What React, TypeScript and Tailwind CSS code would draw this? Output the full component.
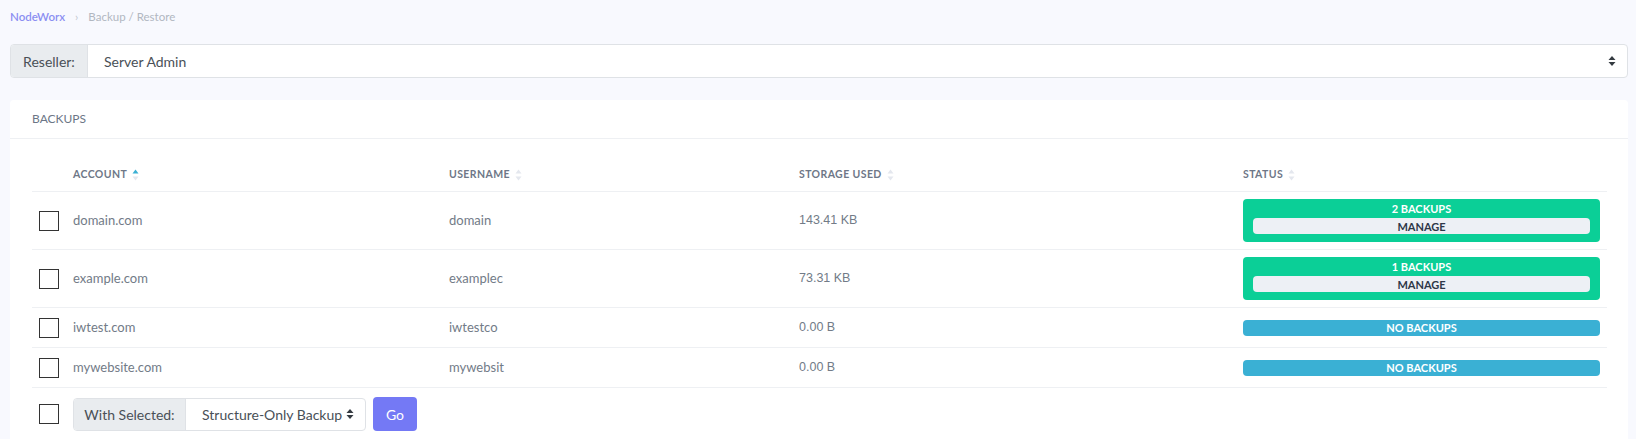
import React from "react";

type Row = {
  account: string;
  username: string;
  storage: string;
  backups: number;
};

const rows: Row[] = [
  { account: "domain.com", username: "domain", storage: "143.41 KB", backups: 2 },
  { account: "example.com", username: "examplec", storage: "73.31 KB", backups: 1 },
  { account: "iwtest.com", username: "iwtestco", storage: "0.00 B", backups: 0 },
  { account: "mywebsite.com", username: "mywebsit", storage: "0.00 B", backups: 0 },
];

const font = { fontFamily: 'Lato, "Noto Sans", sans-serif' };

function SortIcon({ active }: { active?: boolean }) {
  return (
    <svg width="7" height="12" viewBox="0 0 7 12" className="ml-[5px] shrink-0">
      <path d="M3.5 0.5 L6.5 4.5 L0.5 4.5 Z" fill={active ? "#3ab0d4" : "#e4e7ee"} />
      <path d="M3.5 11.5 L6.5 7.5 L0.5 7.5 Z" fill="#e4e7ee" />
    </svg>
  );
}

function SelectArrows() {
  return (
    <svg width="8" height="12" viewBox="0 0 8 12" className="shrink-0">
      <path d="M4 1 L7.5 5 L0.5 5 Z" fill="#343a40" />
      <path d="M4 11 L7.5 7 L0.5 7 Z" fill="#343a40" />
    </svg>
  );
}

function Checkbox() {
  return <div className="h-[20px] w-[20px] border-[1.5px] border-[#333] bg-white" />;
}

function Status({ count }: { count: number }) {
  if (count === 0) {
    return (
      <div className="flex h-[16px] items-center justify-center rounded-[4px] bg-[#3ab0d4] text-[11px] font-bold leading-none text-white">
        NO BACKUPS
      </div>
    );
  }
  return (
    <div className="flex h-[43px] flex-col items-center rounded-[4px] bg-[#0bcf97] px-[10px] pt-[2px]">
      <div className="text-[11px] font-bold leading-[15px] text-white">{count} BACKUPS</div>
      <div className="mt-[2px] flex h-[16px] w-full items-center justify-center rounded-[4px] bg-[#edf0f5] text-[11px] font-bold leading-none text-[#2d3748]">
        MANAGE
      </div>
    </div>
  );
}

const cols = "grid grid-cols-[41px_376px_350px_444px_357px_7px] items-center";

export default function App() {
  return (
    <div className="min-h-screen bg-[#f8f9fe] pl-[10px] pr-[8px]" style={font}>
      {/* breadcrumb */}
      <div className="flex h-[44px] items-start pt-[8px] text-[11.5px]">
        <span className="font-semibold text-[#8b8ff2]">NodeWorx</span>
        <span className="mx-[10px] text-[#c3c8d0]">›</span>
        <span className="text-[#b1b7c1]">Backup / Restore</span>
      </div>

      {/* reseller picker */}
      <div className="flex h-[34px] overflow-hidden rounded-[4px] border border-[#dfe2e6] bg-white">
        <div className="flex w-[77px] items-center justify-center border-r border-[#dfe2e6] bg-[#e9ecef] text-[14px] text-[#495057]">
          Reseller:
        </div>
        <div className="flex flex-1 items-center pl-[16px] pr-[11px] text-[14px] text-[#495057]">
          <span className="flex-1">Server Admin</span>
          <SelectArrows />
        </div>
      </div>

      {/* backups card */}
      <div className="mt-[22px] rounded-t-[4px] bg-white">
        <div className="flex h-[39px] items-center border-b border-[#eef0f3] px-[22px] text-[12px] text-[#6c7686]">
          BACKUPS
        </div>
        <div className="px-[21px] pl-[22px] pt-[20px]">
          <div className={`${cols} h-[33px] border-b border-[#eef0f3] text-[10.5px] font-bold tracking-[0.4px] text-[#6e7787]`}>
            <div />
            <div className="flex items-center">ACCOUNT<SortIcon active /></div>
            <div className="flex items-center">USERNAME<SortIcon /></div>
            <div className="flex items-center">STORAGE USED<SortIcon /></div>
            <div className="flex items-center">STATUS<SortIcon /></div>
            <div />
          </div>

          {rows.map((r) => (
            <div
              key={r.account}
              className={`${cols} border-b border-[#eef0f3] text-[13px] text-[#727b87] ${r.backups > 0 ? "h-[58px]" : "h-[40px]"}`}
            >
              <div className="pl-[7px]">
                <Checkbox />
              </div>
              <div>{r.account}</div>
              <div>{r.username}</div>
              <div className="text-[12.5px]" style={{ fontFamily: '"Liberation Sans", Arial, sans-serif' }}>
                {r.storage}
              </div>
              <div>
                <Status count={r.backups} />
              </div>
              <div />
            </div>
          ))}

          {/* bulk action */}
          <div className="flex h-[52px] items-center">
            <div className="w-[41px] pl-[7px]">
              <Checkbox />
            </div>
            <div className="flex h-[33px] overflow-hidden rounded-[4px] border border-[#dfe2e6] bg-white">
              <div className="flex w-[112px] items-center justify-center border-r border-[#dfe2e6] bg-[#e9ecef] text-[14px] text-[#495057]">
                With Selected:
              </div>
              <div className="flex w-[179px] items-center pl-[16px] pr-[11px] text-[14px] text-[#495057]">
                <span className="flex-1 whitespace-nowrap">Structure-Only Backup</span>
                <SelectArrows />
              </div>
            </div>
            <button className="ml-[7px] flex h-[34px] w-[44px] items-center justify-center rounded-[4px] bg-[#7479f5] text-[14px] text-white">
              Go
            </button>
          </div>
        </div>
      </div>
    </div>
  );
}
